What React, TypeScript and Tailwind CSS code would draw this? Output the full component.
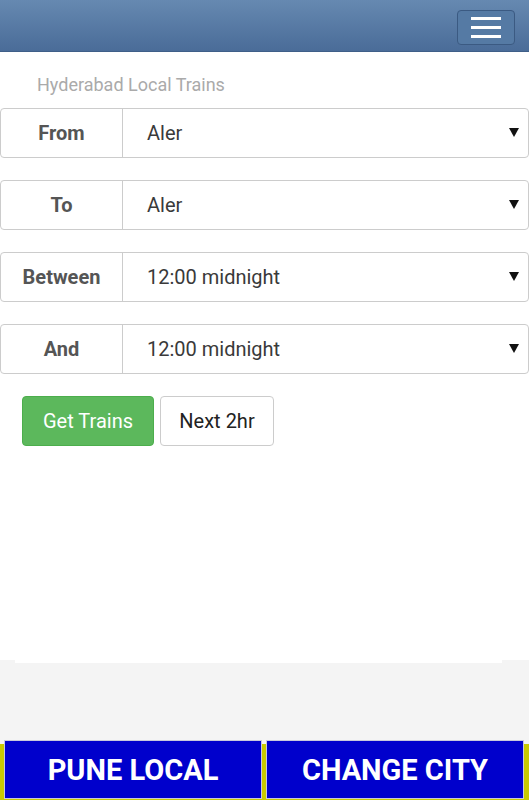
import React from 'react';

const rows = [
    { label: 'From', value: 'Aler' },
    { label: 'To', value: 'Aler' },
    { label: 'Between', value: '12:00 midnight' },
    { label: 'And', value: '12:00 midnight' },
];

const Row = ({ label, value }: { label: string; value: string }) => (
    <div className="flex h-[50px] rounded-[4px] border border-[#cccccc] bg-white">
        <div className="flex w-[122px] items-center justify-center border-r border-[#cccccc] pb-[1px] text-[20px] font-bold text-[#555555]">
            {label}
        </div>
        <div className="flex flex-1 items-center justify-between pb-[1px] pl-[24px] pr-[9px] text-[20px] text-[#3a3a3a]">
            <span>{value}</span>
            <svg width="10" height="9" viewBox="0 0 10 9">
                <polygon points="0,0 10,0 5,9" fill="#111" />
            </svg>
        </div>
    </div>
);

export default function App() {
    return (
        <div className="flex h-[800px] flex-col bg-[#f4f4f4] font-['Roboto',sans-serif]">
            {/* navbar */}
            <header className="flex h-[52px] items-start justify-end border-b border-[#3f5f88] bg-gradient-to-b from-[#6689b1] to-[#4a6c98] pr-[14px] pt-[10px]">
                <button className="flex h-[35px] w-[58px] flex-col items-center justify-center gap-[6px] rounded-[4px] border border-[#3b5a82] bg-[#557aa4]">
                    <span className="block h-[3px] w-[30px] bg-white" />
                    <span className="block h-[3px] w-[30px] bg-white" />
                    <span className="block h-[3px] w-[30px] bg-white" />
                </button>
            </header>

            <main className="h-[608px] bg-white pt-[20px]">
                <div className="ml-[37px] h-[24px] text-[18px] leading-[26px] text-[#aaaaaa]">Hyderabad Local Trains</div>
                <div className="mt-[12px] flex flex-col gap-[22px]">
                    {rows.map((r) => (
                        <Row key={r.label} label={r.label} value={r.value} />
                    ))}
                </div>
                <div className="ml-[22px] mt-[22px] flex gap-[6px]">
                    <button className="h-[50px] w-[132px] rounded-[4px] border border-[#4cae4c] bg-[#5cb85c] pb-[1px] text-[20px] text-white">
                        Get Trains
                    </button>
                    <button className="h-[50px] w-[114px] rounded-[4px] border border-[#cccccc] bg-white pb-[1px] text-[20px] text-[#222222]">
                        Next 2hr
                    </button>
                </div>
            </main>
            <div className="mx-[15px] h-[3px] w-[487px] bg-white" />

            <div className="flex-1" />

            {/* footer */}
            <footer className="flex h-[60px] gap-[4px] bg-[linear-gradient(to_bottom,transparent_4px,#c9c900_4px)] px-[4px] pb-[1px]">
                <button className="h-[59px] w-[258px] border border-[#c8c8dc] bg-[#0000cc] pt-[2px] text-[29px] font-bold text-white">
                    PUNE LOCAL
                </button>
                <button className="h-[59px] w-[258px] border border-[#c8c8dc] bg-[#0000cc] pt-[2px] text-[29px] font-bold text-white">
                    CHANGE CITY
                </button>
            </footer>
        </div>
    );
}
